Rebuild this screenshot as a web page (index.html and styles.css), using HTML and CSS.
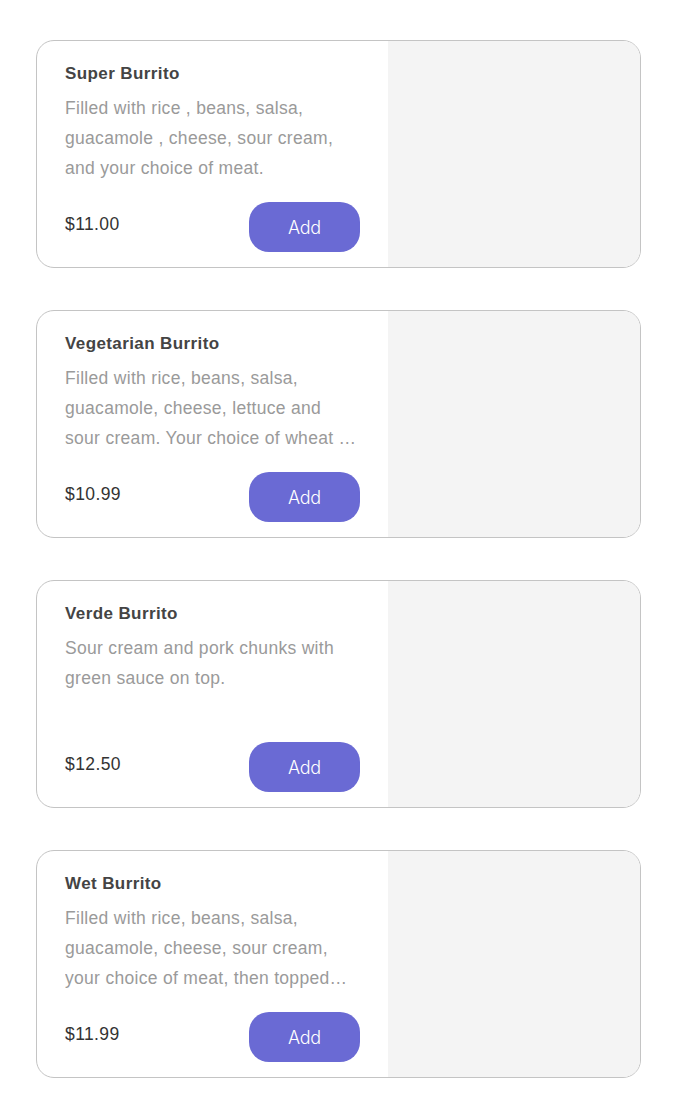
FILE: index.html
```html
<!DOCTYPE html>
<html lang="en">
<head>
    <meta charset="UTF-8">
    <meta name="viewport" content="width=device-width, initial-scale=1.0">
    <title>Burritos</title>
    <link rel="stylesheet" href="styles.css">
</head>
<body>

<div class="menu">
    <div class="item">
        <div class="info">
            <h3>Super Burrito</h3>
            <p class="desc">Filled with rice , beans, salsa, guacamole , cheese, sour cream, and your choice of meat.</p>
            <div class="bottom">
                <span class="price">$11.00</span>
                <button class="add">Add</button>
            </div>
        </div>
        <div class="photo"></div>
    </div>

    <div class="item">
        <div class="info">
            <h3>Vegetarian Burrito</h3>
            <p class="desc">Filled with rice, beans, salsa, guacamole, cheese, lettuce and sour cream. Your choice of wheat or spinach tortilla.</p>
            <div class="bottom">
                <span class="price">$10.99</span>
                <button class="add">Add</button>
            </div>
        </div>
        <div class="photo"></div>
    </div>

    <div class="item">
        <div class="info">
            <h3>Verde Burrito</h3>
            <p class="desc">Sour cream and pork chunks with green sauce on top.</p>
            <div class="bottom">
                <span class="price">$12.50</span>
                <button class="add">Add</button>
            </div>
        </div>
        <div class="photo"></div>
    </div>

    <div class="item">
        <div class="info">
            <h3>Wet Burrito</h3>
            <p class="desc">Filled with rice, beans, salsa, guacamole, cheese, sour cream, your choice of meat, then topped with red sauce and melted cheese.</p>
            <div class="bottom">
                <span class="price">$11.99</span>
                <button class="add">Add</button>
            </div>
        </div>
        <div class="photo"></div>
    </div>
</div>

</body>
</html>
```

FILE: styles.css
```css
body {
    font-family: "Liberation Sans", Arial, sans-serif;
    margin: 0;
    padding: 0;
    background-color: #fff;
}

.menu {
    display: flex;
    flex-direction: column;
    gap: 42px;
    padding: 40px 0 0 36px;
}

.item {
    display: flex;
    width: 603px;
    height: 226px;
    border: 1px solid #c4c4c4;
    border-radius: 18px;
    overflow: hidden;
    background: #fff;
}

.info {
    width: 295px;
    padding: 22px 28px 15px 28px;
    display: flex;
    flex-direction: column;
}

.info h3 {
    margin: 0;
    font-size: 17px;
    line-height: 22px;
    font-weight: bold;
    letter-spacing: 0.4px;
    color: #444;
}

.desc {
    margin: 8px 0 0 0;
    font-size: 17.5px;
    line-height: 30px;
    letter-spacing: 0.3px;
    color: #9a9a9a;
    display: -webkit-box;
    -webkit-line-clamp: 3;
    -webkit-box-orient: vertical;
    overflow: hidden;
}

.bottom {
    margin-top: auto;
    display: flex;
    justify-content: space-between;
    align-items: center;
}

.price {
    font-size: 17.5px;
    letter-spacing: 0.4px;
    color: #333;
    margin-top: -6px;
}

.add {
    width: 111px;
    height: 50px;
    border: none;
    border-radius: 20px;
    background-color: #6a6ad4;
    color: #fff;
    font-family: Inter, "Liberation Sans", sans-serif;
    font-size: 18px;
    font-weight: 300;
    letter-spacing: -0.3px;
}

.photo {
    flex: 1;
    background-color: #f4f4f4;
}
```
